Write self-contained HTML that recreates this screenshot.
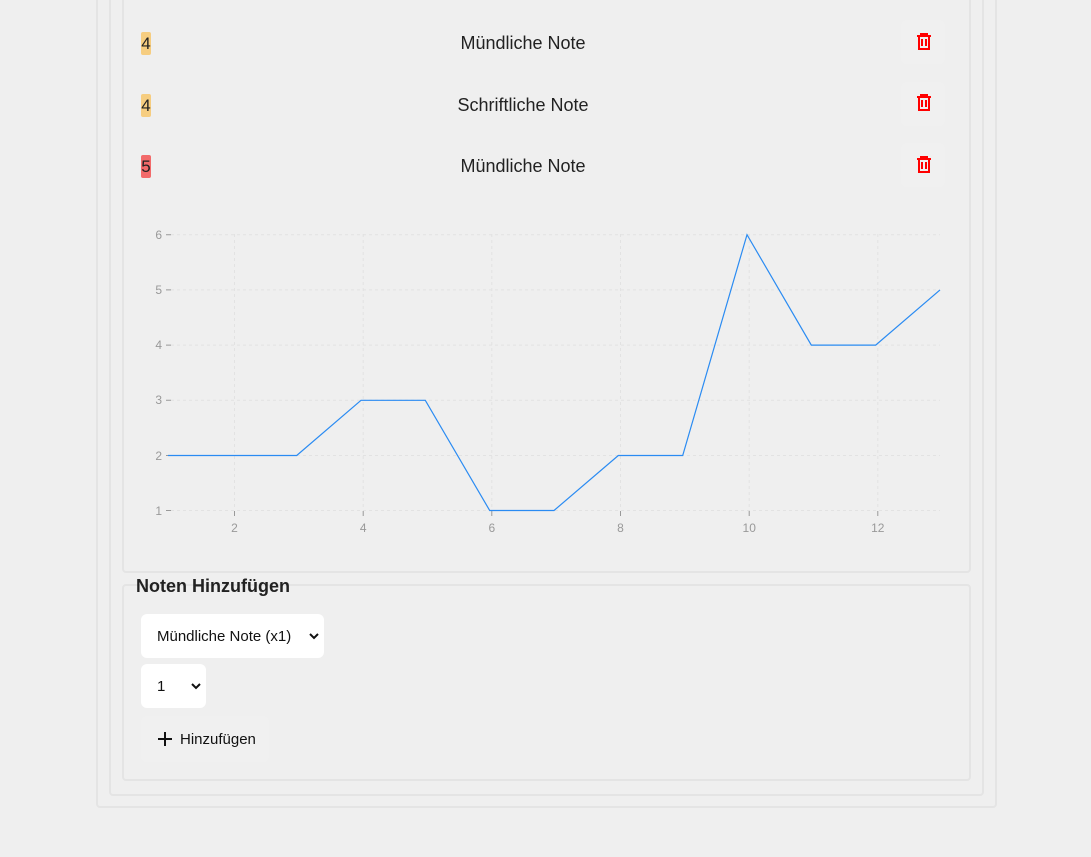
<!DOCTYPE html>
<html><head><meta charset="utf-8"><style>
body{margin:0;width:1091px;height:857px;background:#efefef;font-family:"Liberation Sans",sans-serif;position:relative;overflow:hidden}
.b{position:absolute;border:2px solid #e4e4e4;border-radius:4px;box-sizing:border-box}
.row{position:absolute;left:141px;width:800px;height:40px}
.g{position:absolute;left:0;top:12px;width:10px;height:23px;font-size:17px;line-height:23px;text-align:center;color:#222;border-radius:2px}
.t{position:absolute;left:0;width:764px;top:13px;text-align:center;font-size:18px;color:#222}
.d{position:absolute;left:760px;top:0;width:44px;height:44px;background:#f0f0f0;border-radius:6px}
.sel{position:absolute;background:#fff;border-radius:6px;font-size:15px;color:#111}
</style></head><body>
<div class="b" style="left:96px;top:-10px;width:901px;height:818px"></div>
<div class="b" style="left:109px;top:-10px;width:875px;height:806px"></div>
<div class="b" style="left:122px;top:-10px;width:849px;height:583px"></div>
<div class="b" style="left:122px;top:584px;width:849px;height:197px"></div>

<div class="row" style="top:20px"><div class="g" style="background:#f6cd80">4</div><div class="t">Mündliche Note</div><div class="d"></div></div>
<div class="row" style="top:82px"><div class="g" style="background:#f6cd80">4</div><div class="t">Schriftliche Note</div><div class="d"></div></div>
<div class="row" style="top:143px"><div class="g" style="background:#f26a6a">5</div><div class="t">Mündliche Note</div><div class="d"></div></div>
<svg style="position:absolute;left:0;top:0" width="1091" height="857">
<g fill="none" stroke="#f00" stroke-width="2">
<g id="tr"><path d="M917 36h14M921 36v-2h6v2M919 36v13h10v-13M922 39v7M926 39v7"/></g>
<use href="#tr" y="61"/><use href="#tr" y="123"/>
</g>
<g stroke="#e2e2e2" stroke-dasharray="3 3">
<path d="M171 234.7H940M171 289.9H940M171 345.1H940M171 400.3H940M171 455.5H940M171 510.5H940"/>
<path d="M234.5 234V510M363.2 234V510M491.8 234V510M620.5 234V510M749.2 234V510M877.8 234V510"/>
</g>
<g stroke="#999"><path d="M166 234.7h5M166 289.9h5M166 345.1h5M166 400.3h5M166 455.5h5M166 510.5h5M234.5 511v5M363.2 511v5M491.8 511v5M620.5 511v5M749.2 511v5M877.8 511v5"/></g>
<g fill="#999" font-size="12" font-family="Liberation Sans,sans-serif" text-anchor="end">
<text x="162" y="239">6</text><text x="162" y="294">5</text><text x="162" y="349">4</text><text x="162" y="404">3</text><text x="162" y="460">2</text><text x="162" y="515">1</text>
</g>
<g fill="#999" font-size="12" font-family="Liberation Sans,sans-serif" text-anchor="middle">
<text x="234.5" y="532">2</text><text x="363.2" y="532">4</text><text x="491.8" y="532">6</text><text x="620.5" y="532">8</text><text x="749.2" y="532">10</text><text x="877.8" y="532">12</text>
</g>
<polyline fill="none" stroke="#2a8bf2" stroke-width="1.2" points="168,455.5 232.3,455.5 296.7,455.5 361,400.3 425.3,400.3 489.7,510.5 554,510.5 618.3,455.5 682.7,455.5 747,234.7 811.3,345.1 875.7,345.1 940,289.9"/>
</svg>

<div style="position:absolute;left:136px;top:576px;font-size:18px;font-weight:bold;color:#222">Noten Hinzufügen</div>
<div class="sel" style="left:141px;top:614px;width:183px;height:44px"><span style="position:absolute;left:16px;top:14px">Mündliche Note (x1)</span><svg style="position:absolute;left:168px;top:18px" width="10" height="8"><path d="M1 2l4 4 4-4" fill="none" stroke="#111" stroke-width="2"/></svg></div>
<div class="sel" style="left:141px;top:664px;width:65px;height:44px"><span style="position:absolute;left:16px;top:14px">1</span><svg style="position:absolute;left:50px;top:18px" width="10" height="8"><path d="M1 2l4 4 4-4" fill="none" stroke="#111" stroke-width="2"/></svg></div>
<div style="position:absolute;left:141px;top:716px;width:128px;height:46px;background:#f0f0f0;border-radius:6px">
<svg style="position:absolute;left:16px;top:15px" width="16" height="16"><path d="M8 1v14M1 8h14" stroke="#111" stroke-width="2"/></svg>
<span style="position:absolute;left:39px;top:15px;font-size:15px;color:#111">Hinzufügen</span></div>
</body></html>
